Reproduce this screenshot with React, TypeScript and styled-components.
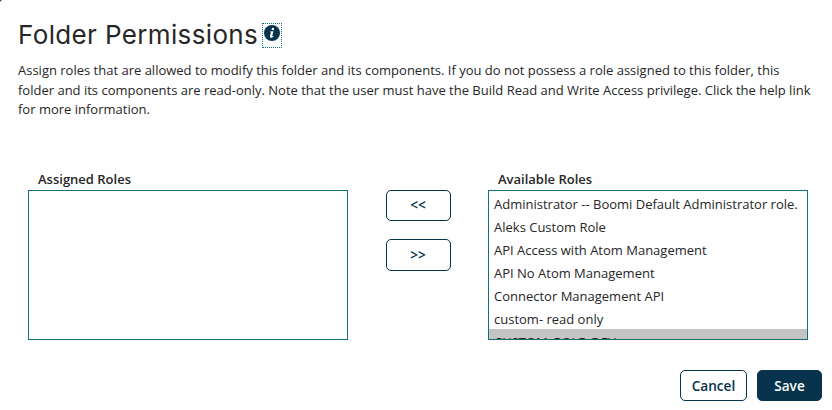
import React from "react";
import styled, { createGlobalStyle } from "styled-components";

const GlobalStyle = createGlobalStyle`
  *, *::before, *::after { box-sizing: border-box; }
  body {
    margin: 0;
    background: #fefefe;
    color: #272727;
    font-family: "Open Sans", sans-serif;
    font-size: 13px;
  }
`;

const Dialog = styled.main`
  position: relative;
  display: flex;
  flex-direction: column;
  width: 832px;
  height: 410px;
  overflow: hidden;
`;

const WindowCorner = styled.svg`
  position: absolute;
  top: 0;
  left: 0;
`;

const Header = styled.header`
  display: flex;
  align-items: flex-start;
  height: 61px;
  padding: 17px 18px 0;
`;

const Title = styled.h1`
  width: 244px;
  margin: 0;
  font: 400 26px/36px Inter, sans-serif;
  letter-spacing: 0.36px;
  white-space: nowrap;
`;

const HelpLink = styled.a`
  display: block;
  width: 20px;
  height: 25px;
  margin-top: 6px;
  padding: 1px;
  border: 1px dotted #127079;

  svg { display: block; }
`;

const Description = styled.p`
  height: 60px;
  margin: 0;
  padding: 0 18px;
  line-height: 19.5px;
  white-space: nowrap;
`;

const Picker = styled.section`
  display: grid;
  grid-template-columns: 320px 65px 320px;
  column-gap: 38px;
  margin-top: 49px;
  padding-left: 28px;
`;

const RoleColumn = styled.div<{ $shift?: boolean }>`
  margin-left: ${(p) => (p.$shift ? "-1px" : "0")};
`;

const Label = styled.label`
  display: block;
  height: 20px;
  padding-left: 10px;
  font-weight: 600;
  line-height: 18px;
`;

const RoleList = styled.ul`
  width: 320px;
  height: 150px;
  margin: 0;
  padding: 0;
  border: 1px solid #127079;
  overflow: hidden;
  list-style: none;
`;

const Role = styled.li<{ $selected?: boolean }>`
  height: 23px;
  padding-left: 5px;
  line-height: 26px;
  white-space: nowrap;
  background: ${(p) => (p.$selected ? "#c4c4c4" : "transparent")};
`;

const MoveButtons = styled.div`
  display: flex;
  flex-direction: column;
  gap: 18px;
  padding-top: 20px;
`;

const Button = styled.button<{ $primary?: boolean; $width: number; $height?: number }>`
  width: ${(p) => p.$width}px;
  height: ${(p) => p.$height ?? 31}px;
  padding: 0 1px 1px 0;
  border: 1px solid #07344c;
  border-radius: 5px;
  background: ${(p) => (p.$primary ? "#07344c" : "#fefefe")};
  color: ${(p) => (p.$primary ? "#fefefe" : "#07344c")};
  font: 600 13.6px/20px "Open Sans", sans-serif;
`;

const Footer = styled.footer`
  display: flex;
  justify-content: flex-end;
  gap: 10px;
  margin-top: 30px;
  padding-right: 10px;

  ${Button} { padding: 1px 0 0; }
`;

const availableRoles = [
  "Administrator -- Boomi Default Administrator role.",
  "Aleks Custom Role",
  "API Access with Atom Management",
  "API No Atom Management",
  "Connector Management API",
  "custom- read only",
  "CUSTOM_ROLE_DEV",
];

const InfoIcon = () => (
  <svg width="16" height="16" viewBox="0 0 16 16" aria-label="Help">
    <circle cx="8" cy="8" r="8" fill="#07344c" />
    <circle cx="8.9" cy="4.1" r="1.25" fill="#fff" />
    <path
      d="M6.1 6.5 9.4 6.2 8.3 10.8c-.1.5.2.6 1.1-.1l.3.5c-1 1-1.9 1.5-2.7 1.5-.9 0-1.2-.6-1-1.5l.9-3.9-1-.2z"
      fill="#fff"
    />
  </svg>
);

export default function App() {
  return (
    <>
      <GlobalStyle />
      <Dialog>
        <WindowCorner width="3" height="3" viewBox="0 0 3 3">
          <path d="M0 0H2L0 2Z" fill="#555" />
        </WindowCorner>
        <Header>
          <Title>Folder Permissions</Title>
          <HelpLink>
            <InfoIcon />
          </HelpLink>
        </Header>
        <Description>
          Assign roles that are allowed to modify this folder and its components. If you do not
          possess a role assigned to this folder, this
          <br />
          folder and its components are read-only. Note that the user must have the Build Read and
          Write Access privilege. Click the help link
          <br />
          for more information.
        </Description>
        <Picker>
          <RoleColumn>
            <Label>Assigned Roles</Label>
            <RoleList />
          </RoleColumn>
          <MoveButtons>
            <Button $width={65}>&lt;&lt;</Button>
            <Button $width={65} $height={32}>&gt;&gt;</Button>
          </MoveButtons>
          <RoleColumn $shift>
            <Label>Available Roles</Label>
            <RoleList>
              {availableRoles.map((role, i) => (
                <Role key={role} $selected={i === availableRoles.length - 1}>
                  {role}
                </Role>
              ))}
            </RoleList>
          </RoleColumn>
        </Picker>
        <Footer>
          <Button $width={67}>Cancel</Button>
          <Button $width={65} $primary>Save</Button>
        </Footer>
      </Dialog>
    </>
  );
}
